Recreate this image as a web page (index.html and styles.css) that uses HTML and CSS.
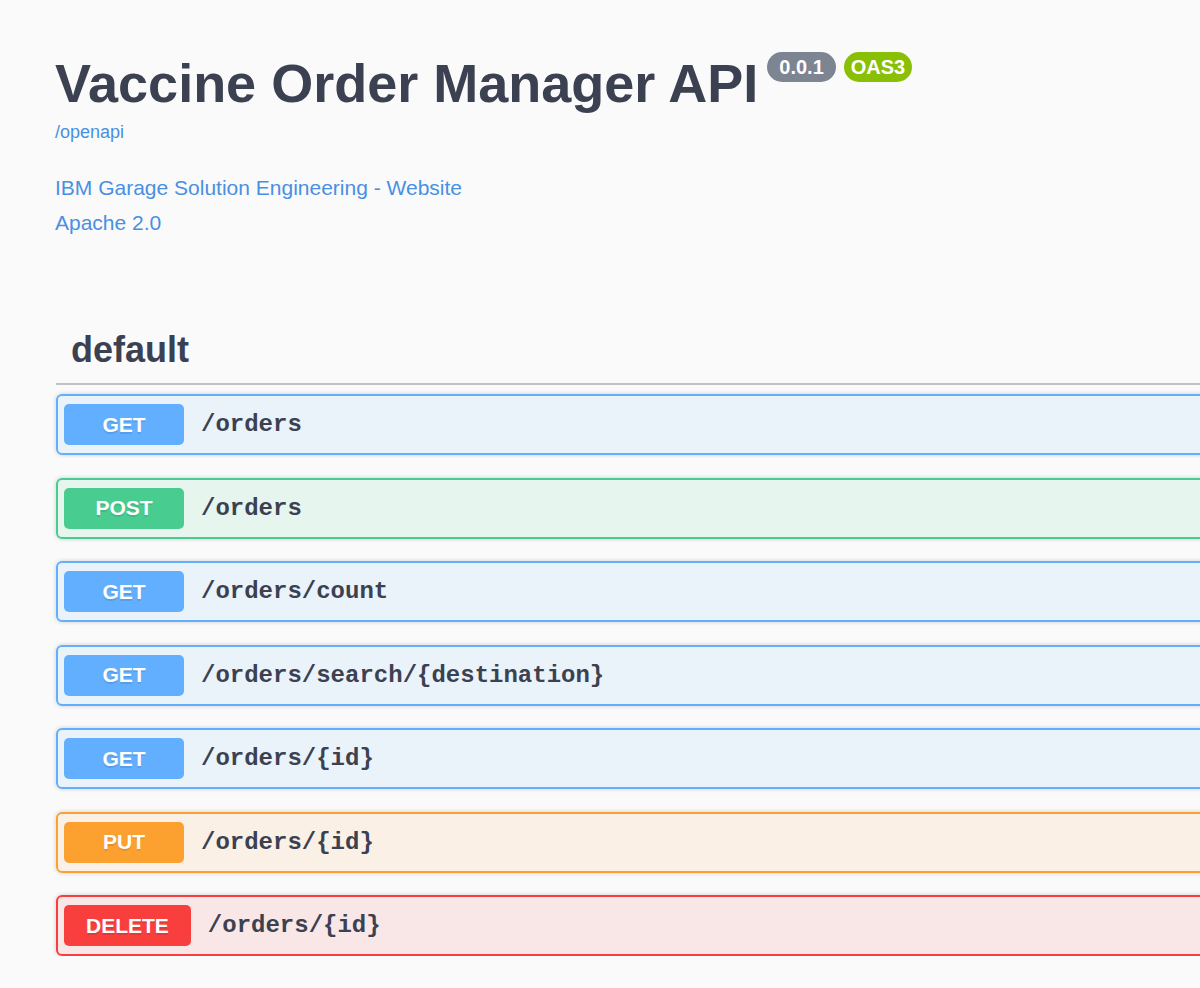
FILE: index.html
```html
<!DOCTYPE html>
<html lang="en">
<head>
<meta charset="utf-8">
<title>Vaccine Order Manager API</title>
<link rel="stylesheet" href="styles.css">
</head>
<body>
<div class="wrapper">
  <section class="info">
    <h2 class="title">
      <span class="title-text">Vaccine Order Manager API</span>
      <span class="badges">
        <small class="badge badge-version">0.0.1</small>
        <small class="badge badge-oas">OAS3</small>
      </span>
    </h2>
    <a class="base-url" href="#">/openapi</a>
    <div class="contact">
      <a class="info-link" href="#">IBM Garage Solution Engineering - Website</a>
    </div>
    <div class="license">
      <a class="info-link" href="#">Apache 2.0</a>
    </div>
  </section>

  <section class="tag-section">
    <h3 class="tag-title">default</h3>
    <div class="ops">
      <div class="opblock op-get">
        <span class="method">GET</span>
        <span class="path">/orders</span>
      </div>
      <div class="opblock op-post">
        <span class="method">POST</span>
        <span class="path">/orders</span>
      </div>
      <div class="opblock op-get">
        <span class="method">GET</span>
        <span class="path">/orders/count</span>
      </div>
      <div class="opblock op-get">
        <span class="method">GET</span>
        <span class="path">/orders/search/{destination}</span>
      </div>
      <div class="opblock op-get">
        <span class="method">GET</span>
        <span class="path">/orders/{id}</span>
      </div>
      <div class="opblock op-put">
        <span class="method">PUT</span>
        <span class="path">/orders/{id}</span>
      </div>
      <div class="opblock op-delete">
        <span class="method">DELETE</span>
        <span class="path">/orders/{id}</span>
      </div>
    </div>
  </section>
</div>
</body>
</html>
```

FILE: styles.css
```css
html, body {
  margin: 0;
  padding: 0;
}

body {
  background: #fafafa;
  color: #3b4151;
  font-family: "Liberation Sans", Arial, Helvetica, sans-serif;
  overflow: hidden;
}

.wrapper {
  width: 1500px;
  padding: 0 0 0 55px;
  box-sizing: border-box;
}

.info {
  padding-top: 52px;
}

.title {
  margin: 0;
  display: flex;
  align-items: flex-start;
  font-size: 54px;
  line-height: 62px;
  font-weight: 700;
  color: #3b4151;
}

.badges {
  display: flex;
  gap: 8px;
  margin-left: 9px;
  margin-top: 0;
}

.badge {
  display: inline-block;
  font-size: 20px;
  line-height: 24px;
  font-weight: 700;
  color: #fff;
  padding: 3px 7px;
  border-radius: 57px;
}

.badge-version {
  background: #7d8492;
  padding: 3px 12px;
}

.badge-oas {
  background: #89bf04;
}

.base-url {
  display: block;
  margin-top: 8px;
  font-size: 18px;
  line-height: 21px;
  color: #4990e2;
  text-decoration: none;
}

.contact {
  margin-top: 28px;
}

.contact, .license {
  line-height: 33px;
}

.info-link {
  font-size: 21px;
  color: #4990e2;
  text-decoration: none;
}

.tag-section {
  margin-top: 73px;
  margin-left: 1px;
}

.tag-title {
  margin: 0;
  padding: 15px 15px 12px;
  font-size: 36px;
  line-height: 42px;
  font-weight: 700;
  color: #3b4151;
  border-bottom: 2px solid rgba(59, 65, 81, 0.3);
}

.ops {
  display: flex;
  flex-direction: column;
  gap: 22.5px;
  padding-top: 9px;
}

.opblock {
  display: flex;
  align-items: center;
  height: 61px;
  box-sizing: border-box;
  padding: 0 6px;
  border: 2px solid;
  border-radius: 6px;
  box-shadow: 0 0 4.5px rgba(0, 0, 0, 0.19);
}

.method {
  min-width: 120px;
  height: 41px;
  box-sizing: border-box;
  padding: 0 22px;
  border-radius: 5px;
  display: flex;
  align-items: center;
  justify-content: center;
  font-size: 21px;
  font-weight: 700;
  color: #fff;
  text-shadow: 0 1.5px 0 rgba(0, 0, 0, 0.1);
}

.path {
  padding: 0 17px;
  font-family: "Liberation Mono", "Courier New", monospace;
  font-size: 24px;
  font-weight: 700;
  color: #3b4151;
}

.op-get {
  border-color: #61affe;
  background: rgba(97, 175, 254, 0.1);
}
.op-get .method { background: #61affe; }

.op-post {
  border-color: #49cc90;
  background: rgba(73, 204, 144, 0.1);
}
.op-post .method { background: #49cc90; }

.op-put {
  border-color: #fca130;
  background: rgba(252, 161, 48, 0.1);
}
.op-put .method { background: #fca130; }

.op-delete {
  border-color: #f93e3e;
  background: rgba(249, 62, 62, 0.1);
}
.op-delete .method { background: #f93e3e; }
```
